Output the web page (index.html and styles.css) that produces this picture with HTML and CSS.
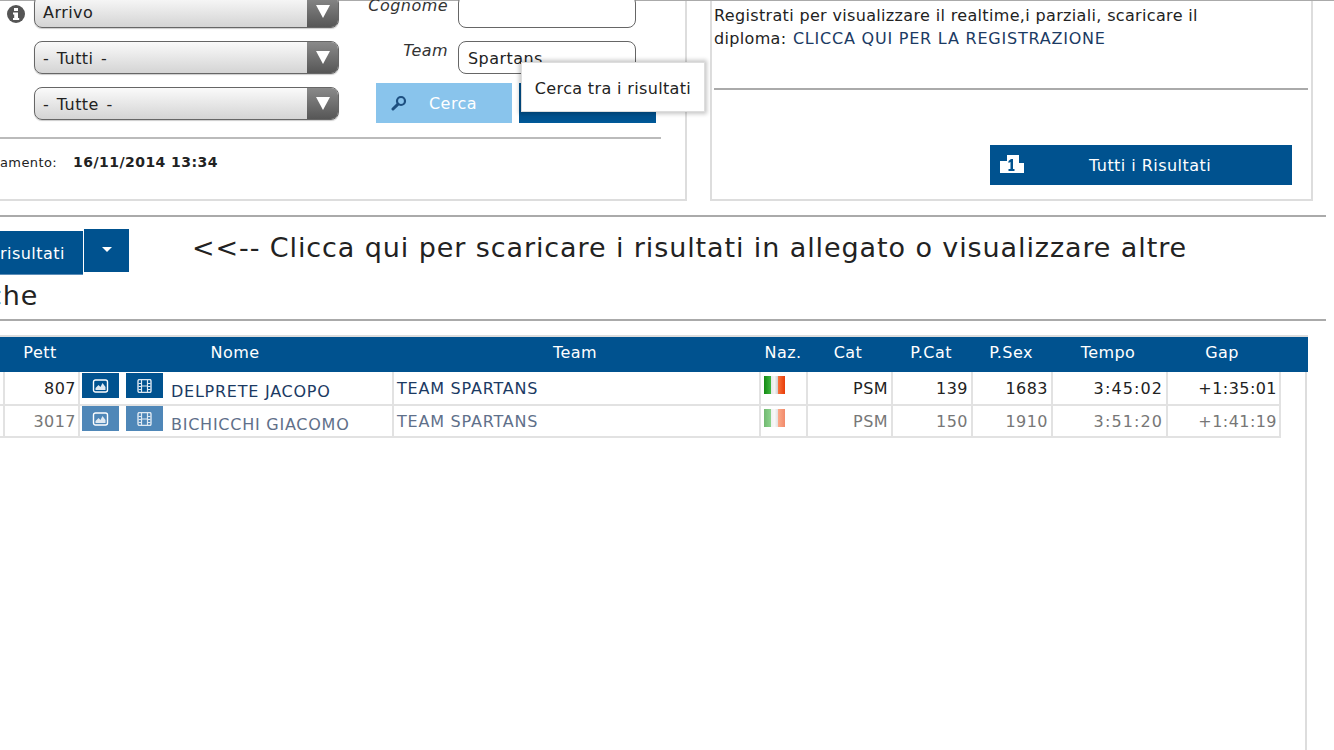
FILE: index.html
```html
<!DOCTYPE html>
<html lang="it">
<head>
<meta charset="utf-8">
<title>Risultati</title>
<link rel="stylesheet" href="styles.css">
</head>
<body>
<div class="page">
  <section class="top">
    <div class="search-panel">
      <div class="form">
        <div class="info-col">
          <svg class="info" viewBox="0 0 18 18" aria-hidden="true"><circle cx="9" cy="9" r="9" fill="#555"/><rect x="7" y="3" width="4" height="3" fill="#fff"/><path d="M6 7.5h5V13h1.200v2H6v-2h1.200V9.500H6z" fill="#fff"/></svg>
        </div>
        <div class="selects">
          <div class="select"><span class="select-text">Arrivo</span><span class="select-btn"><i class="tri"></i></span></div>
          <div class="select"><span class="select-text">- Tutti -</span><span class="select-btn"><i class="tri"></i></span></div>
          <div class="select"><span class="select-text">- Tutte -</span><span class="select-btn"><i class="tri"></i></span></div>
        </div>
        <div class="fields">
          <div class="field"><label class="label">Cognome</label><div class="input"></div></div>
          <div class="field"><label class="label">Team</label><div class="input">Spartans</div></div>
          <div class="buttons">
            <div class="btn btn-search">
              <svg class="lens" viewBox="0 0 16 16" aria-hidden="true"><circle cx="10" cy="6" r="4" fill="none" stroke="#1d4f80" stroke-width="2.200"/><path d="M7 9.200 2 14" stroke="#1d4f80" stroke-width="3" stroke-linecap="round"/></svg>
              <span>Cerca</span>
            </div>
            <div class="btn btn-dark"></div>
            <div class="tooltip">Cerca tra i risultati</div>
          </div>
        </div>
      </div>
      <hr class="rule-short">
      <p class="updated"><span>amento:</span><b>16/11/2014 13:34</b></p>
    </div>
    <div class="reg-panel">
      <p class="reg-text">Registrati per visualizzare il realtime,i parziali, scaricare il diploma: <a class="reg-link">CLICCA QUI PER LA REGISTRAZIONE</a></p>
      <hr class="rule-reg">
      <div class="all-btn">
        <svg class="podium" viewBox="0 0 24 18" aria-hidden="true"><path d="M0 6h7V0h12v8h5v10H0z" fill="#fff"/><path d="M11 4 8.500 6v2l2-1v7H8.500v2h6v-2H13V4z" fill="#00528f"/></svg>
        <span>Tutti i Risultati</span>
      </div>
    </div>
  </section>
  <hr class="rule-full rule-a">
  <section class="download">
    <div class="dl-btns">
      <div class="dl-main">risultati</div>
      <div class="dl-caret"><i class="caret"></i></div>
    </div>
    <p class="dl-text">&lt;&lt;-- Clicca qui per scaricare i risultati in allegato o visualizzare altre</p>
    <p class="dl-more">che</p>
  </section>
  <hr class="rule-full rule-b">
  <section class="results">
    <div class="thead">
      <span>Pett</span><span>Nome</span><span>Team</span><span>Naz.</span><span>Cat</span><span>P.Cat</span><span>P.Sex</span><span>Tempo</span><span>Gap</span>
    </div>
    <table class="tbl">
      <tbody>
        <tr>
          <td class="c0"></td><td class="c1 num">807</td>
          <td class="c2 name"><div class="name-in"><span class="sq"><svg class="ico" viewBox="0 0 16 14"><rect x="1" y="1" width="14" height="12" rx="2" fill="none" stroke="#fff" stroke-width="1.400"/><path d="M3 11V9l3-3 2 2 2-4 3 4v3z" fill="#dfe9f2"/></svg></span><span class="sq"><svg class="ico" viewBox="0 0 16 14"><rect x="1.500" y="0.500" width="13" height="13" rx="1.500" fill="none" stroke="#dfe9f2" stroke-width="1.400"/><path d="M5 1v12M11 1v12M2 4.500h3M2 7.500h3M2 10.500h3M11 4.500h3M11 7.500h3M11 10.500h3M5 7h6" stroke="#dfe9f2" stroke-width="1.200"/></svg></span><span class="nm">DELPRETE JACOPO</span></div></td>
          <td class="c3 team">TEAM SPARTANS</td>
          <td class="c4"><span class="flag"></span></td>
          <td class="c5 num">PSM</td><td class="c6 num">139</td><td class="c7 num">1683</td><td class="c8 num">3:45:02</td><td class="c9 num">+1:35:01</td>
        </tr>
        <tr class="alt">
          <td class="c0"></td><td class="c1 num">3017</td>
          <td class="c2 name"><div class="name-in"><span class="sq"><svg class="ico" viewBox="0 0 16 14"><rect x="1" y="1" width="14" height="12" rx="2" fill="none" stroke="#fff" stroke-width="1.400"/><path d="M3 11V9l3-3 2 2 2-4 3 4v3z" fill="#dfe9f2"/></svg></span><span class="sq"><svg class="ico" viewBox="0 0 16 14"><rect x="1.500" y="0.500" width="13" height="13" rx="1.500" fill="none" stroke="#dfe9f2" stroke-width="1.400"/><path d="M5 1v12M11 1v12M2 4.500h3M2 7.500h3M2 10.500h3M11 4.500h3M11 7.500h3M11 10.500h3M5 7h6" stroke="#dfe9f2" stroke-width="1.200"/></svg></span><span class="nm">BICHICCHI GIACOMO</span></div></td>
          <td class="c3 team">TEAM SPARTANS</td>
          <td class="c4"><span class="flag"></span></td>
          <td class="c5 num">PSM</td><td class="c6 num">150</td><td class="c7 num">1910</td><td class="c8 num">3:51:20</td><td class="c9 num">+1:41:19</td>
        </tr>
      </tbody>
    </table>
  </section>
</div>
</body>
</html>
```
FILE: styles.css
```css
* { box-sizing: border-box; }
html, body { margin: 0; padding: 0; height: 750px; overflow: hidden; background: #fff; }
body { font-family: "DejaVu Sans", Verdana, sans-serif; font-size: 16px; letter-spacing: .45px; color: #222; }
.page { width: 1334px; height: 750px; overflow: hidden; }

.top { display: flex; height: 201px; border-top: 1px solid #aaa; }
.search-panel { width: 687px; height: 200px; border-right: 2px solid #ddd; border-bottom: 2px solid #ddd; }
.form { display: flex; height: 136px; }
.info-col { width: 34px; padding: 4px 0 0 7px; }
.info { width: 18px; height: 18px; display: block; }
.selects { width: 305px; margin-top: -6px; display: flex; flex-direction: column; gap: 13px; }
.select { height: 33px; border: 1.500px solid #666; border-radius: 8px; display: flex; overflow: hidden; background: linear-gradient(#fafafa, #d4d4d4); box-shadow: 0 1px 1px #ccc; }
.select-text { flex: 1; padding-left: 8px; line-height: 33px; color: #222; word-spacing: 2px; }
.select-btn { width: 31px; background: linear-gradient(#8a8a8a, #565656); display: flex; align-items: center; justify-content: center; }
.tri { width: 0; height: 0; border-left: 7px solid transparent; border-right: 7px solid transparent; border-top: 13px solid #fff; }

.fields { width: 317px; margin-top: -6px; }
.field { display: flex; align-items: flex-start; height: 33px; margin-bottom: 13px; }
.label { width: 109px; text-align: right; font-style: italic; color: #333; line-height: 20px; }
.field:first-child .label { line-height: 22px; }
.input { width: 178px; height: 33px; margin-left: 10px; border: 1.500px solid #666; border-radius: 8px; background: #fff; padding-left: 9px; line-height: 34px; color: #222; }
.buttons { display: flex; gap: 7px; position: relative; margin-left: 37px; margin-top: -4px; }
.btn { width: 136px; height: 40px; display: flex; align-items: center; }
.btn-search { background: #89c4ec; color: #fff; }
.btn-search span { margin-left: 22px; }
.lens { width: 16px; height: 16px; margin-left: 15px; }
.btn-dark { background: linear-gradient(#00528f 90%, #005a9a); width: 137px; }
.tooltip { position: absolute; left: 145px; top: -21px; width: 184px; height: 50px; background: #fff; border: 1px solid #ddd; box-shadow: 0 0 4px 2px rgba(0,0,0,.22); line-height: 51px; letter-spacing: .35px; text-align: center; color: #222; white-space: nowrap; }

.rule-short { width: 661px; height: 2px; margin: 0; border: 0; background: #bbb; }
.updated { margin: 13px 0 0; font-size: 14px; line-height: 20px; }
.updated span { font-size: 13px; letter-spacing: .4px; }
.updated b { margin-left: 16px; }

.reg-panel { width: 603px; height: 200px; margin-left: 23px; border-left: 2px solid #ddd; border-right: 2px solid #ddd; border-bottom: 2px solid #ddd; padding-left: 2px; }
.reg-text { margin: 3px 0 0; width: 500px; line-height: 23px; letter-spacing: .34px; color: #222; }
.reg-link { color: #1b3a63; letter-spacing: .78px; margin-left: 1px; }
.rule-reg { margin: 38px 0 0; width: 594px; height: 2px; border: 0; background: #aaa; }
.all-btn { margin: 55px 0 0 276px; width: 302px; height: 40px; background: #00528f; color: #fff; display: flex; align-items: center; }
.podium { width: 24px; height: 18px; margin: -2px 0 0 10px; }
.all-btn span { margin-left: 65px; }

.rule-full { width: 1326px; height: 2px; margin: 0; border: 0; background: #aaa; }
.rule-a { margin-top: 14px; }
.download { height: 102px; position: relative; }
.dl-btns { display: flex; align-items: flex-start; position: absolute; left: 0; top: 12px; }
.dl-main { width: 83px; height: 44px; margin-top: 2px; background: #00528f; color: #fff; text-align: right; padding-right: 20px; line-height: 46px; white-space: nowrap; border-bottom: 1px solid #5b8db8; }
.dl-caret { width: 45px; height: 43px; margin-left: 1px; background: #00528f; display: flex; justify-content: center; padding-top: 18px; }
.caret { width: 0; height: 0; border-left: 5px solid transparent; border-right: 5px solid transparent; border-top: 5px solid #fff; }
.dl-text { margin: 0 0 0 192px; padding-top: 11px; font-size: 27px; letter-spacing: .9px; line-height: 40px; color: #222; white-space: nowrap; }
.dl-more { margin: 8px 0 0 -13px; font-size: 27px; letter-spacing: .9px; line-height: 40px; }

.results { margin-top: 14px; width: 1308px; height: 500px; border-top: 2px solid #ddd; position: relative; }
.results::after { content: ""; position: absolute; left: 1305px; top: 35px; width: 2px; height: 465px; background: #ddd; }
.thead { height: 35px; background: #00528f; color: #fff; display: grid; grid-template-columns: 80px 310px 370px 46px 84px 82px 78px 116px 112px; align-items: center; text-align: center; }
.thead span { display: block; padding-bottom: 5px; }

.tbl { border-collapse: collapse; table-layout: fixed; width: 1280px; color: #222; }
.tbl td { border: 2px solid #e2e2e2; height: 32px; padding: 0 3px; overflow: hidden; white-space: nowrap; }
.tbl tr:first-child td { border-top: 0; height: 33px; }
.tbl td:first-child { border-left: 0; }
.tbl td.c0 { width: 4px; padding: 0; }
.tbl td.c1 { width: 75px; padding-right: 2px; }
.tbl td.c2 { width: 314px; padding-left: 2px; }
.c3 { width: 367px; }
.c4 { width: 47px; }
.c5 { width: 85px; }
.c6 { width: 80px; }
.c7 { width: 80px; }
.tbl td.c8 { width: 115px; letter-spacing: 1.1px; }
.tbl td.c9 { width: 113px; padding-right: 2px; }
.num { text-align: right; }
.name-in { display: flex; align-items: flex-start; height: 30px; }
.sq { width: 37px; height: 25px; background: #00528f; display: flex; align-items: center; justify-content: center; margin-right: 7px; }
.sq + .sq { margin-right: 8px; }
.ico { width: 17px; height: 14px; }
.nm { color: #1b3a63; padding-top: 8px; line-height: 21px; letter-spacing: .75px; }
.team { color: #1b3a63; letter-spacing: .78px; }
.flag { display: block; width: 21px; height: 18px; margin-top: -6px; background: linear-gradient(90deg, #138a13, #3fb53f 32%, #e8e8e8 34%, #f4f4f4 50%, #cfcfcf 66%, #f8703a 68%, #e83c08); }
.alt td { color: #777; }
.alt .nm, .alt .team { color: #5f708a; }
.alt .sq { background: #4f87b8; }
.alt .flag { opacity: .6; }
```
